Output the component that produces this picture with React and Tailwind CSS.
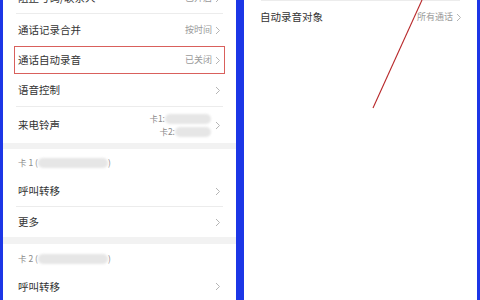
import React from "react";

const font = { fontFamily: '"Noto Sans CJK SC", "Noto Sans", sans-serif' };

function Chevron() {
  return (
    <svg width="6" height="9" viewBox="0 0 6 9" className="shrink-0">
      <path d="M1 1 L4.5 4.5 L1 8" fill="none" stroke="#b5b5b5" strokeWidth="1" />
    </svg>
  );
}

function Row({ label, value, chevron = true, h = "h-[31px]" }) {
  return (
    <div className={`flex items-center justify-between pl-[15px] pr-[15px] ${h}`}>
      <span className="text-[10.5px] text-[#333]">{label}</span>
      <div className="flex items-center gap-[3px]">
        {value && <span className="text-[9px] text-[#9a9a9a]">{value}</span>}
        {chevron && <Chevron />}
      </div>
    </div>
  );
}

function Divider() {
  return <div className="mx-[13px] h-px bg-[#ececec]" />;
}

function Pill({ w }) {
  return <span className={`inline-block h-[10px] rounded-full bg-[#e6e6e6] blur-[1px] ${w}`} />;
}

function Header({ label, h }) {
  return (
    <div className={`flex items-center pl-[15px] text-[8.5px] text-[#8a8a8a] ${h}`}>
      <span>{label} (</span>
      <Pill w="w-[70px]" />
      <span>)</span>
    </div>
  );
}

export default function App() {
  return (
    <div className="flex h-[300px] w-[480px] overflow-hidden bg-[#1c36e6]" style={font}>
      {/* left panel */}
      <div className="ml-[3px] flex h-full w-[233px] flex-col overflow-hidden bg-white">
        <div className="-mt-[17px]">
          <Row label="阻止号码/联系人" value="已开启" h="h-[30px]" />
          <Divider />
          <Row label="通话记录合并" value="按时间" h="h-[32px]" />
          <div className="mx-[11px] flex h-[28px] items-center justify-between border border-[#d9605c] pl-[3px] pr-[3px]">
            <span className="text-[10.5px] text-[#333]">通话自动录音</span>
            <div className="flex items-center gap-[3px]">
              <span className="text-[9px] text-[#9a9a9a]">已关闭</span>
              <Chevron />
            </div>
          </div>
          <Row label="语音控制" h="h-[32px]" />
          <Divider />
          <div className="flex h-[36px] items-center justify-between pl-[15px] pr-[15px]">
            <span className="text-[10.5px] text-[#333]">来电铃声</span>
            <div className="flex items-center gap-[4px]">
              <div className="flex flex-col items-end gap-[2px] text-[8.5px] leading-[11px] text-[#8a8a8a]">
                <div className="flex items-center">
                  <span>卡1:</span>
                  <Pill w="w-[46px]" />
                </div>
                <div className="flex items-center">
                  <span>卡2:</span>
                  <Pill w="w-[36px]" />
                </div>
              </div>
              <Chevron />
            </div>
          </div>
          <div className="h-[6px] bg-[#f2f2f2]" />
          <Header label="卡 1" h="h-[27px]" />
          <Row label="呼叫转移" h="h-[30px]" />
          <Divider />
          <Row label="更多" h="h-[30px]" />
          <div className="h-[7px] bg-[#f2f2f2]" />
          <Header label="卡 2" h="h-[29px]" />
          <Row label="呼叫转移" h="h-[27px]" />
        </div>
      </div>

      {/* divider */}
      <div className="w-[8px]" />

      {/* right panel */}
      <div className="relative h-full w-[233px] bg-white">
        <div className="mx-[17px] h-px bg-[#ececec]" />
        <div className="flex h-[32px] items-center justify-between pl-[16px] pr-[15px]">
          <span className="text-[10.5px] text-[#333]">自动录音对象</span>
          <div className="flex items-center gap-[3px]">
            <span className="text-[9px] text-[#9a9a9a]">所有通话</span>
            <Chevron />
          </div>
        </div>
        <svg className="absolute left-0 top-0" width="233" height="120" viewBox="0 0 233 120">
          <line x1="178" y1="0" x2="129" y2="108" stroke="#b8282a" strokeWidth="1.1" />
        </svg>
      </div>
    </div>
  );
}
